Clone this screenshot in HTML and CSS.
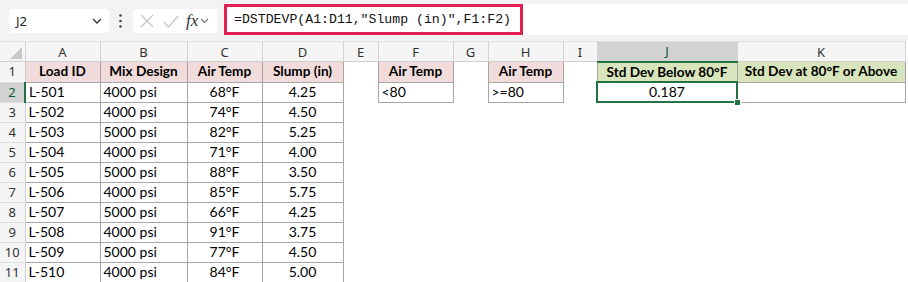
FILE: index.html
```html
<!DOCTYPE html>
<html>
<head>
  <meta charset="UTF-8">
  <title>Slump by Air Temp</title>
  <link rel="stylesheet" href="styles.css">
</head>
<body>
  <div class="toolbar">
    <div class="namebox">
      <span>J2</span>
      <svg class="chev" width="10" height="6" viewBox="0 0 10 6"><path d="M1 1 L5 5 L9 1" fill="none" stroke="#333" stroke-width="1.3"/></svg>
    </div>
    <div class="grip">
      <svg width="3" height="14" viewBox="0 0 3 14"><circle cx="1.5" cy="1.5" r="1.3" fill="#444"/><circle cx="1.5" cy="7" r="1.3" fill="#444"/><circle cx="1.5" cy="12.5" r="1.3" fill="#444"/></svg>
    </div>
    <div class="fxbox">
      <svg width="14" height="14" viewBox="0 0 14 14"><path d="M1 1 L13 13 M13 1 L1 13" stroke="#c4c4c4" stroke-width="1.2"/></svg>
      <svg width="16" height="13" viewBox="0 0 16 13"><path d="M1 7 L5.5 12 L15 1" fill="none" stroke="#c4c4c4" stroke-width="1.2"/></svg>
      <span class="fx">fx</span>
      <svg class="chev" width="9" height="6" viewBox="0 0 9 6"><path d="M1 1 L4.5 4.5 L8 1" fill="none" stroke="#777" stroke-width="1.1"/></svg>
    </div>
    <div class="formula">
      <span class="formula-text">=DSTDEVP(A1:D11,"Slump (in)",F1:F2)</span>
    </div>
  </div>

  <table class="sheet">
    <colgroup>
      <col style="width:25px"><col style="width:75px"><col style="width:87px"><col style="width:75px">
      <col style="width:81px"><col style="width:35px"><col style="width:75px"><col style="width:35px">
      <col style="width:75px"><col style="width:34px"><col style="width:140px"><col style="width:168px">
    </colgroup>
    <thead>
      <tr>
        <th class="corner"><svg width="12" height="12" viewBox="0 0 12 12"><path d="M12 0 L12 12 L0 12 Z" fill="#c8c8c8"/></svg></th>
        <th>A</th><th>B</th><th>C</th><th>D</th><th>E</th><th>F</th>
        <th>G</th><th>H</th><th>I</th><th class="sel-col">J</th><th>K</th>
      </tr>
    </thead>
    <tbody>
      <tr>
        <td class="rh">1</td>
        <td class="b hd">Load ID</td><td class="b hd">Mix Design</td><td class="b hd">Air Temp</td><td class="b hd">Slump (in)</td>
        <td></td><td class="b hd">Air Temp</td><td></td><td class="b hd">Air Temp</td><td></td>
        <td class="b hd green">Std Dev Below 80°F</td><td class="b hd green">Std Dev at 80°F or Above</td>
      </tr>
      <tr>
        <td class="rh sel-row">2</td>
        <td class="b">L-501</td><td class="b">4000 psi</td><td class="b c">68°F</td><td class="b c">4.25</td>
        <td></td><td class="b">&lt;80</td><td></td><td class="b">&gt;=80</td><td></td>
        <td class="b c active">0.187<span class="handle"></span></td><td class="b"></td>
      </tr>
      <tr><td class="rh">3</td><td class="b">L-502</td><td class="b">4000 psi</td><td class="b c">74°F</td><td class="b c">4.50</td><td colspan="7"></td></tr>
      <tr><td class="rh">4</td><td class="b">L-503</td><td class="b">5000 psi</td><td class="b c">82°F</td><td class="b c">5.25</td><td colspan="7"></td></tr>
      <tr><td class="rh">5</td><td class="b">L-504</td><td class="b">4000 psi</td><td class="b c">71°F</td><td class="b c">4.00</td><td colspan="7"></td></tr>
      <tr><td class="rh">6</td><td class="b">L-505</td><td class="b">5000 psi</td><td class="b c">88°F</td><td class="b c">3.50</td><td colspan="7"></td></tr>
      <tr><td class="rh">7</td><td class="b">L-506</td><td class="b">4000 psi</td><td class="b c">85°F</td><td class="b c">5.75</td><td colspan="7"></td></tr>
      <tr><td class="rh">8</td><td class="b">L-507</td><td class="b">5000 psi</td><td class="b c">66°F</td><td class="b c">4.25</td><td colspan="7"></td></tr>
      <tr><td class="rh">9</td><td class="b">L-508</td><td class="b">4000 psi</td><td class="b c">91°F</td><td class="b c">3.75</td><td colspan="7"></td></tr>
      <tr><td class="rh">10</td><td class="b">L-509</td><td class="b">5000 psi</td><td class="b c">77°F</td><td class="b c">4.50</td><td colspan="7"></td></tr>
      <tr><td class="rh">11</td><td class="b">L-510</td><td class="b">4000 psi</td><td class="b c">84°F</td><td class="b c">5.00</td><td colspan="7"></td></tr>
    </tbody>
  </table>
</body>
</html>
```

FILE: styles.css
```css
/* page */
body {
  margin: 0;
  background: #ffffff;
  font-family: Lato, "Liberation Sans", sans-serif;
  overflow: hidden;
}

/* formula bar */
.toolbar {
  display: flex;
  align-items: flex-start;
  height: 41px;
  padding: 4px 0 0 9px;
  box-sizing: border-box;
  background: #f3f3f3;
}
.namebox {
  display: flex;
  align-items: center;
  justify-content: space-between;
  width: 100px;
  height: 24px;
  margin-top: 5px;
  padding: 0 7px 0 7px;
  box-sizing: border-box;
  background: #fff;
  border-radius: 4px;
  font-family: "Noto Sans", sans-serif;
  font-size: 13px;
  color: #222;
}
.grip {
  display: flex;
  align-items: center;
  height: 24px;
  margin: 5px 0 0 10px;
}
.fxbox {
  display: flex;
  align-items: center;
  gap: 9px;
  width: 84px;
  height: 24px;
  margin: 5px 0 0 11px;
  padding-left: 7px;
  box-sizing: border-box;
  background: #fff;
  border-radius: 4px;
}
.fxbox .fx {
  font-family: "Liberation Serif", serif;
  font-style: italic;
  font-size: 17px;
  color: #333;
  margin-left: -2px;
}
.fxbox .chev {
  margin-left: -7px;
}
.formula {
  flex: 1;
  height: 31px;
  margin-left: 7px;
  background: #fff;
}
.formula-text {
  display: inline-block;
  width: 299px;
  height: 31px;
  line-height: 25px;
  padding-left: 7px;
  box-sizing: border-box;
  border: 3px solid #e3204f;
  font-family: "Liberation Mono", monospace;
  font-size: 13.2px;
  color: #111;
  white-space: nowrap;
}

/* grid */
.sheet {
  table-layout: fixed;
  border-collapse: collapse;
  width: 905px;
  font-size: 14px;
}
.sheet th {
  height: 17px;
  padding: 0;
  background: #f5f5f5;
  border-top: 1px solid #e0e0e0;
  border-right: 1px solid #d4d4d4;
  border-bottom: 1px solid #cfcfcf;
  font-family: "Noto Sans", sans-serif;
  font-weight: normal;
  font-size: 13px;
  line-height: 16px;
  vertical-align: middle;
  color: #333;
}
.sheet th.corner {
  text-align: right;
  vertical-align: bottom;
  padding: 0 3px 2px 0;
  line-height: 0;
}
.sheet th.sel-col {
  background: #d2d2d2;
  border-bottom: 2px solid #217346;
  color: #0f5a2f;
}
.sheet td {
  height: 18px;
  padding: 0 3px 1px;
  vertical-align: middle;
  white-space: nowrap;
  overflow: hidden;
  color: #000;
  line-height: 16px;
}
.sheet td.rh {
  padding: 0 0 1px;
  text-align: center;
  background: #f5f5f5;
  border-right: 1px solid #cfcfcf;
  border-bottom: 1px solid #dedede;
  font-family: "Noto Sans", sans-serif;
  font-size: 13px;
  color: #333;
}
.sheet td.sel-row {
  background: #d2d2d2;
  border-right: 2px solid #217346;
  color: #0f5a2f;
}
.sheet td.b {
  border: 1px solid #a6a6a6;
}
.sheet td.c {
  text-align: center;
}
.sheet td.hd {
  text-align: center;
  font-weight: bold;
  font-size: 13.6px;
  background: #f2dcdb;
}
.sheet td.hd.green {
  background: #d8e4bc;
}
.sheet td.active {
  position: relative;
  overflow: visible;
  outline: 2px solid #217346;
  outline-offset: -1px;
}
.handle {
  position: absolute;
  right: -4px;
  bottom: -4px;
  width: 5px;
  height: 5px;
  background: #217346;
  border: 1px solid #fff;
}
```
